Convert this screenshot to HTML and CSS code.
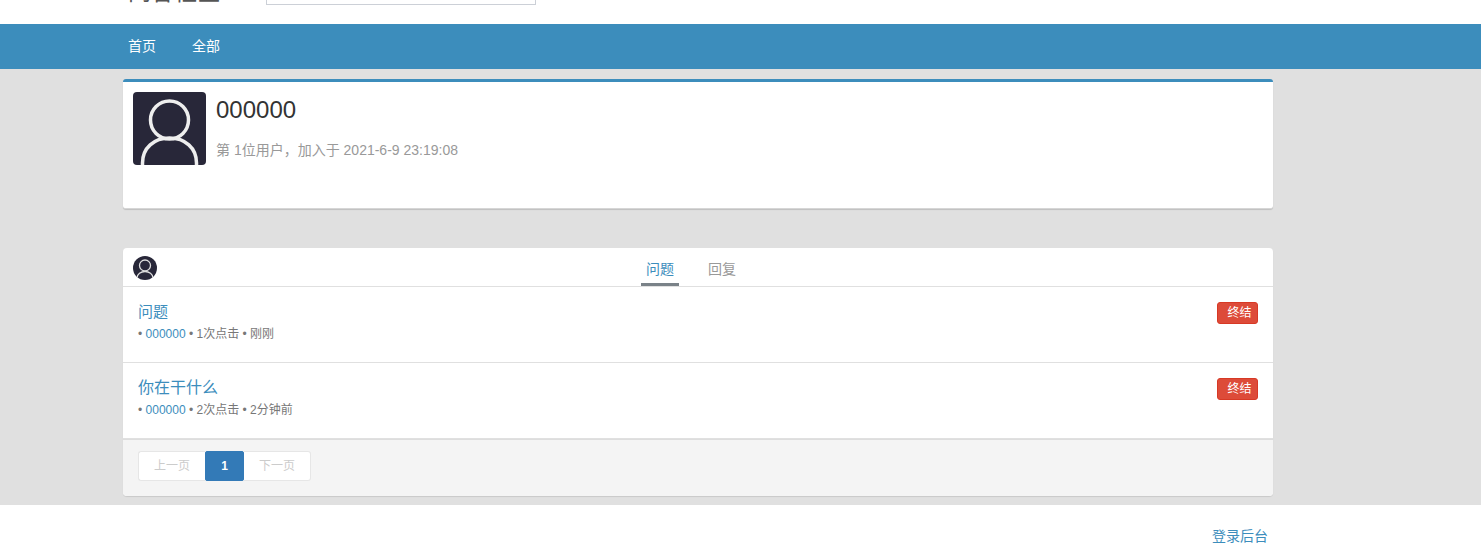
FILE: index.html
```html
<!DOCTYPE html>
<html lang="zh">
<head>
<meta charset="utf-8">
<title>000000</title>
<link rel="stylesheet" href="styles.css">
</head>
<body>
<header class="top">
  <div class="top-inner">
    <div class="logo">问答社区</div>
    <div class="search"></div>
  </div>
</header>
<nav class="nav">
  <div class="nav-inner">
    <a class="nav-link">首页</a>
    <a class="nav-link">全部</a>
  </div>
</nav>
<main class="content">
  <section class="profile">
    <svg class="avatar-lg" viewBox="0 0 73 73">
      <rect width="73" height="73" rx="4" fill="#282739"/>
      <circle cx="36.500" cy="28" r="19" fill="none" stroke="#eeeeee" stroke-width="3.500"/>
      <path d="M9.500 73V71C9.500 56 21 46 36.500 46S63.500 56 63.500 71V73" fill="none" stroke="#eeeeee" stroke-width="3.500"/>
    </svg>
    <div class="profile-text">
      <h1 class="profile-name">000000</h1>
      <p class="profile-meta">第 1位用户，加入于 2021-6-9 23:19:08</p>
    </div>
  </section>
  <section class="panel">
    <div class="tabs">
      <svg class="avatar-sm" viewBox="0 0 24 24">
        <defs><clipPath id="round"><circle cx="12" cy="12" r="12"/></clipPath></defs>
        <g clip-path="url(#round)">
          <rect width="24" height="24" fill="#282739"/>
          <circle cx="12" cy="9.500" r="5.500" fill="none" stroke="#dddddd" stroke-width="1.300"/>
          <path d="M4 24V22C4 18 8 15.500 12 15.500S20 18 20 22V24" fill="none" stroke="#dddddd" stroke-width="1.300"/>
        </g>
      </svg>
      <div class="tab-list">
        <a class="tab tab-active">问题</a>
        <a class="tab">回复</a>
      </div>
    </div>
    <article class="topic">
      <div class="topic-main">
        <a class="topic-title topic-title-sm">问题</a>
        <div class="topic-meta">• <a class="user">000000</a> • 1次点击 • 刚刚</div>
      </div>
      <span class="badge">终结</span>
    </article>
    <article class="topic">
      <div class="topic-main">
        <a class="topic-title">你在干什么</a>
        <div class="topic-meta">• <a class="user">000000</a> • 2次点击 • 2分钟前</div>
      </div>
      <span class="badge">终结</span>
    </article>
    <div class="pager-bar">
      <div class="pager">
        <a class="page page-first">上一页</a>
        <a class="page page-current">1</a>
        <a class="page page-last">下一页</a>
      </div>
    </div>
  </section>
</main>
<footer class="footer">
  <div class="footer-inner"><a class="admin">登录后台</a></div>
</footer>
</body>
</html>
```
FILE: styles.css
```css
* { box-sizing: border-box; }
html, body { margin: 0; padding: 0; }
body {
  height: 559px;
  overflow: hidden;
  background: #fff;
  font-family: "Liberation Sans", "Noto Sans CJK SC", sans-serif;
  font-size: 14px;
  color: #333;
}
.top { height: 14px; background: #fff; overflow: hidden; }
.top-inner { width: 1150px; margin-left: 123px; height: 5px; display: flex; align-items: flex-end; padding-left: 5px; }
.logo { width: 138px; font-size: 23px; line-height: 26px; color: #555; flex: none; }
.search { width: 270px; height: 30px; border: 1px solid #ccd0d7; flex: none; }
.nav { margin-top: 10px; height: 45px; background: #3c8dbc; }
.nav-inner { margin-left: 123px; width: 1150px; display: flex; gap: 36px; padding-left: 5px; }
.nav-link { font-size: 14px; line-height: 45px; color: #fff; }
.content { background: #e0e0e0; margin-top: 0; padding: 10px 0 10px; height: 436px; }
.profile {
  width: 1150px; height: 130px; margin-left: 123px;
  background: #fff; border-top: 3px solid #3c8dbc; border-radius: 3px;
  box-shadow: 0 1px 1px rgba(0,0,0,.15);
  border-bottom: 1px solid #d6d6d6;
  padding: 10px; display: flex; gap: 10px;
}
.avatar-lg { width: 73px; height: 73px; flex: none; }
.profile-text { flex: 1; }
.profile-name { margin: 3px 0 0; font-size: 24px; font-weight: 400; line-height: 30px; color: #333; }
.profile-meta { margin: 15px 0 0; font-size: 14px; line-height: 20px; color: #999; }
.panel {
  width: 1150px; height: 248px; margin: 39px 0 0 123px;
  background: #fff; border-radius: 4px;
  box-shadow: 0 1px 1px rgba(0,0,0,.1);
  overflow: hidden;
}
.tabs { height: 39px; border-bottom: 1px solid #e0e0e0; position: relative; padding: 8px 10px 0; }
.avatar-sm { width: 24px; height: 24px; display: block; }
.tab-list { position: absolute; left: 518px; top: 0; height: 38px; display: flex; }
.tab { display: block; width: 38px; margin-right: 24px; margin-left: -14px; padding-top: 11px; height: 38px; text-align: center; font-size: 14px; line-height: 20px; color: #999; }
.tab-list .tab { width: 38px; margin: 0 24px 0 0; }
.tab-list .tab + .tab { margin-left: 0; }
.tab-active { color: #3c8dbc; border-bottom: 3px solid #7a8288; }
.topic { height: 76px; border-bottom: 1px solid #e0e0e0; padding: 15px 15px 0; display: flex; justify-content: space-between; align-items: flex-start; }
.topic-main { min-width: 0; }
.topic-title { display: block; font-size: 15px; line-height: 20px; color: #3c8dbc; }
.topic-title:not(.topic-title-sm) { font-size: 16px; }
.topic-meta { margin-top: 4px; font-size: 12px; line-height: 17px; color: #777; }
.user { color: #3c8dbc; }
.badge { width: 41px; height: 22px; background: #dd4b39; border: 1px solid #d73925; border-radius: 3px; color: #fff; font-size: 12px; line-height: 20px; text-align: center; padding-left: 4px; }
.pager-bar { height: 57px; background: #f4f4f4; border-top: 1px solid #ddd; padding: 11px 15px 0; }
.pager { display: flex; height: 30px; }
.page { display: block; height: 30px; font-size: 12px; line-height: 28px; text-align: center; background: #fff; border: 1px solid #e6e6e6; color: #ccc; }
.page-first { width: 67px; border-radius: 3px 0 0 3px; border-right: 0; }
.page-current { width: 39px; background: #337ab7; border-color: #337ab7; color: #fff; font-weight: 700; border-radius: 2px; }
.page-last { width: 67px; border-left: 0; border-radius: 0 3px 3px 0; }
.footer { height: 54px; background: #fff; }
.footer-inner { width: 1150px; margin-left: 123px; padding: 21px 5px 0 0; text-align: right; }
.admin { font-size: 14px; line-height: 20px; color: #3c8dbc; }
```
